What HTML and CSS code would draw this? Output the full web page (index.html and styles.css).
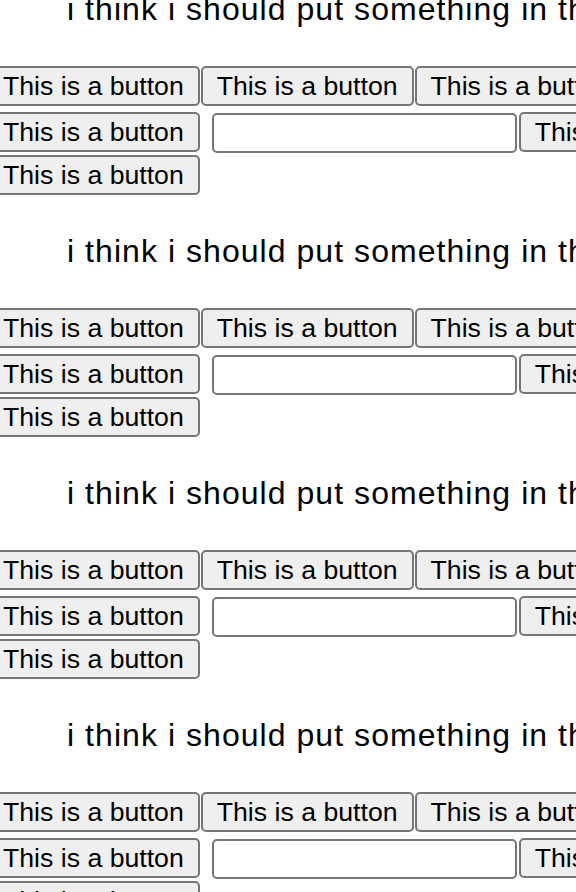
FILE: index.html
```
<!DOCTYPE html>
<html>
<head>
<meta charset="utf-8">
<link rel="stylesheet" href="styles.css">
</head>
<body>
<div class="page">
  <section class="block">
    <p class="title">i think i should put something in there</p>
    <div class="rows">
      <div class="row row-top">
        <button class="btn">This is a button</button>
        <button class="btn">This is a button</button>
        <button class="btn">This is a button</button>
      </div>
      <div class="row row-mid">
        <button class="btn">This is a button</button>
        <input class="field" type="text">
        <button class="btn">This is a button</button>
      </div>
      <div class="row">
        <button class="btn">This is a button</button>
      </div>
    </div>
  </section>
  <section class="block">
    <p class="title">i think i should put something in there</p>
    <div class="rows">
      <div class="row row-top">
        <button class="btn">This is a button</button>
        <button class="btn">This is a button</button>
        <button class="btn">This is a button</button>
      </div>
      <div class="row row-mid">
        <button class="btn">This is a button</button>
        <input class="field" type="text">
        <button class="btn">This is a button</button>
      </div>
      <div class="row">
        <button class="btn">This is a button</button>
      </div>
    </div>
  </section>
  <section class="block">
    <p class="title">i think i should put something in there</p>
    <div class="rows">
      <div class="row row-top">
        <button class="btn">This is a button</button>
        <button class="btn">This is a button</button>
        <button class="btn">This is a button</button>
      </div>
      <div class="row row-mid">
        <button class="btn">This is a button</button>
        <input class="field" type="text">
        <button class="btn">This is a button</button>
      </div>
      <div class="row">
        <button class="btn">This is a button</button>
      </div>
    </div>
  </section>
  <section class="block">
    <p class="title">i think i should put something in there</p>
    <div class="rows">
      <div class="row row-top">
        <button class="btn">This is a button</button>
        <button class="btn">This is a button</button>
        <button class="btn">This is a button</button>
      </div>
      <div class="row row-mid">
        <button class="btn">This is a button</button>
        <input class="field" type="text">
        <button class="btn">This is a button</button>
      </div>
      <div class="row">
        <button class="btn">This is a button</button>
      </div>
    </div>
  </section>
</div>
</body>
</html>
```
FILE: styles.css
```
html, body {
  margin: 0;
  padding: 0;
  background: #ffffff;
  overflow: hidden;
}

.page {
  margin-top: -9px;
  font-family: "Liberation Sans", Arial, sans-serif;
  color: #000000;
}

.block {
  display: flex;
  flex-direction: column;
  padding-bottom: 38px;
}

.title {
  margin: 0 0 39px 0;
  padding-left: 67px;
  font-size: 32px;
  line-height: 36px;
  letter-spacing: 1.05px;
  white-space: nowrap;
}

.rows {
  display: flex;
  flex-direction: column;
  gap: 2px;
  margin-left: -13px;
}

.row {
  display: flex;
  gap: 1px;
  white-space: nowrap;
}

.row-top {
  margin-bottom: 4px;
}

.btn {
  flex: none;
  box-sizing: border-box;
  height: 40px;
  margin: 0;
  padding: 2px 14px;
  font-family: "Liberation Sans", Arial, sans-serif;
  font-size: 26.67px;
  line-height: 32px;
  color: #000000;
  background: #efefef;
  border: 2px solid #767676;
  border-radius: 5px;
}

.field {
  flex: none;
  box-sizing: border-box;
  width: 305px;
  height: 40px;
  margin: 1px 1px 0 11px;
  padding: 0 4px;
  background: #ffffff;
  border: 2px solid #767676;
  border-radius: 5px;
  font-size: 26.67px;
}
```
